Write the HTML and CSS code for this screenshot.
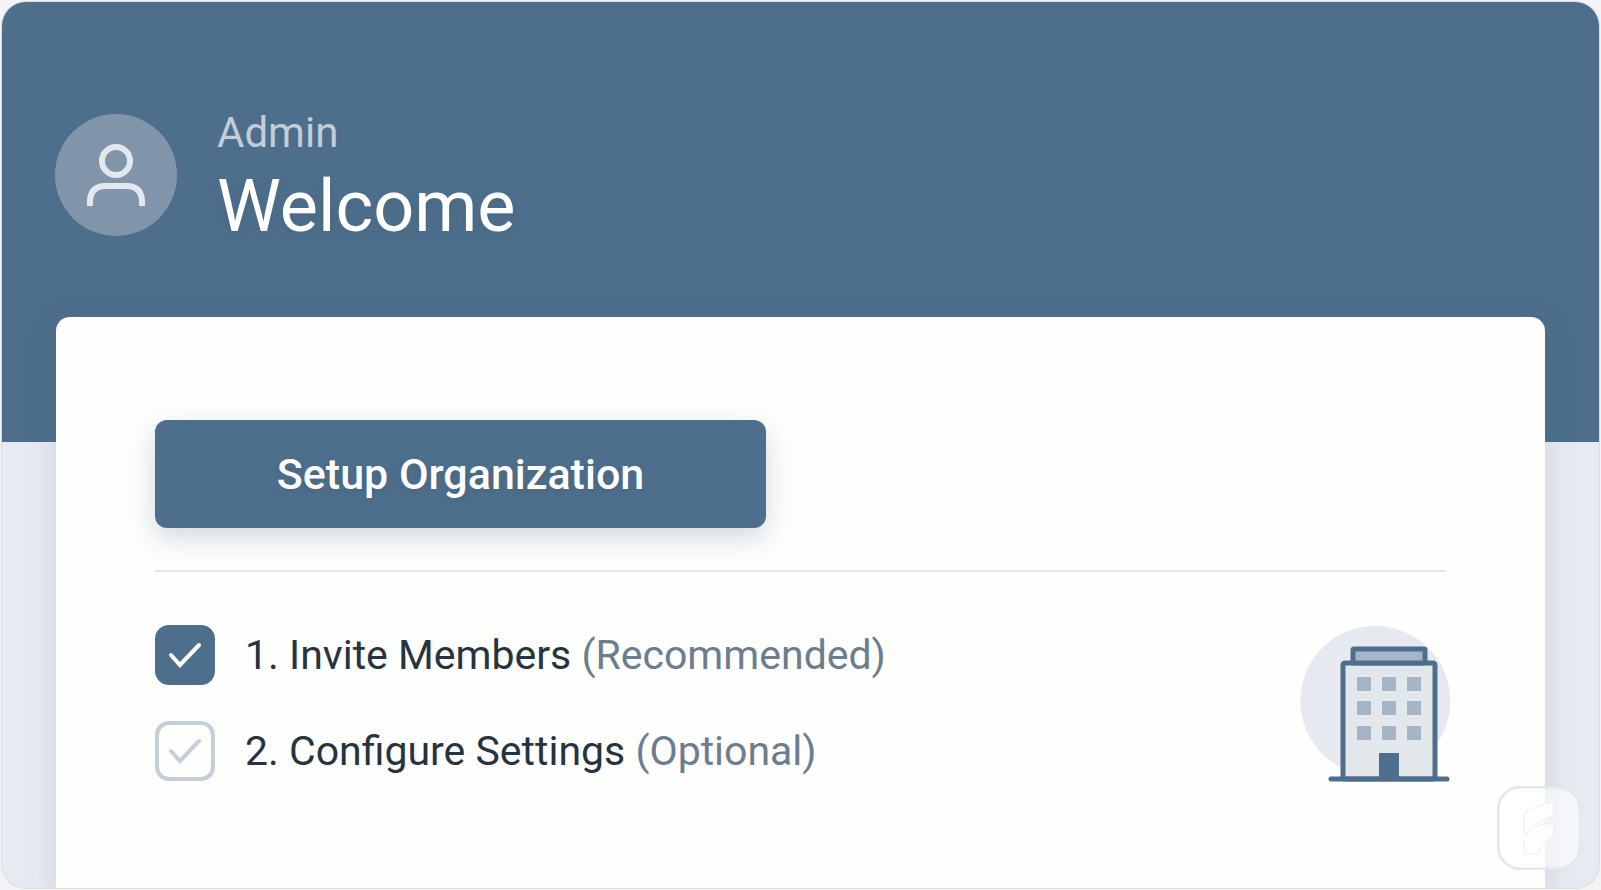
FILE: index.html
```
<!DOCTYPE html>
<html lang="en">
  <head>
    <meta charset="UTF-8" />
    <meta name="viewport" content="width=device-width, initial-scale=1.0" />
    <title>Welcome</title>
    <link rel="stylesheet" href="styles.css">
  </head>
  <body>
    <div class="screen">
      <header class="header">
        <svg class="avatar" viewBox="0 0 122 122" aria-hidden="true">
          <circle cx="61" cy="61" r="61" fill="#8195aa" />
          <g fill="none" stroke="#e3e8ee" stroke-width="6">
            <circle cx="61" cy="47" r="14" />
            <path d="M35 92V88Q35 72 51 72H71Q87 72 87 88V92" />
          </g>
        </svg>
        <div class="greeting">
          <p class="role">Admin</p>
          <h1>Welcome</h1>
        </div>
      </header>

      <main class="card">
        <button type="button" class="setup">Setup Organization</button>
        <hr />
        <div class="content">
          <ul class="steps">
            <li>
              <label class="step" for="invite">
                <span class="check">
                  <input type="checkbox" id="invite" name="invite" checked />
                  <svg class="tick" viewBox="0 0 60 60" aria-hidden="true">
                    <path d="M16 30L25 40L44 20" />
                  </svg>
                </span>
                <span>1. Invite Members <span class="note">(Recommended)</span></span>
              </label>
            </li>
            <li>
              <label class="step" for="configure">
                <span class="check">
                  <input type="checkbox" id="configure" name="configure" />
                  <svg class="tick" viewBox="0 0 60 60" aria-hidden="true">
                    <path d="M16 30L25 40L44 20" />
                  </svg>
                </span>
                <span>2. Configure Settings <span class="note">(Optional)</span></span>
              </label>
            </li>
          </ul>

          <svg class="building" viewBox="0 1 152 160" aria-hidden="true">
            <path d="M41 143A75 75 0 1 1 139 118V143Z" fill="#e6eaf0" />
            <rect x="44" y="39" width="92" height="116" rx="2" fill="#e2e7ec" stroke="#4e6f8c" stroke-width="5" />
            <rect x="54" y="25" width="72" height="14" rx="1" fill="#a5b5c6" stroke="#4e6f8c" stroke-width="5" />
            <g fill="#a5b5c6">
              <rect x="58" y="53" width="14" height="14" />
              <rect x="83" y="53" width="14" height="14" />
              <rect x="108" y="53" width="14" height="14" />
              <rect x="58" y="77" width="14" height="14" />
              <rect x="83" y="77" width="14" height="14" />
              <rect x="108" y="77" width="14" height="14" />
              <rect x="58" y="102" width="14" height="14" />
              <rect x="83" y="102" width="14" height="14" />
              <rect x="108" y="102" width="14" height="14" />
            </g>
            <rect x="80" y="129" width="20" height="26" fill="#4e6f8c" />
            <path d="M32 155H148" stroke="#4e6f8c" stroke-width="5" stroke-linecap="round" />
          </svg>
        </div>
      </main>

      <svg class="badge" viewBox="0 0 84 84" aria-hidden="true">
        <rect x="1" y="1" width="82" height="82" rx="23" fill="#fff" fill-opacity="0.6" stroke="#e4e9f0" stroke-width="3" />
        <path d="M27 48V28Q40 18 57 16V26Q54 33 46 34Q35 37 31 47Z" />
        <path d="M27 68V56Q30 44 42 39Q50 36 57 39V49Q54 54 50 55Q44 58 41 68Z" />
      </svg>
    </div>
  </body>
</html>
```

FILE: styles.css
```
* {
  box-sizing: border-box;
}

body {
  margin: 0;
  padding: 2px;
  background-color: #f4f4f4;
  color: #263340;
  font-family: Roboto, sans-serif;
  font-size: 42px;
  line-height: 48px;
}

.screen {
  position: relative;
  display: flex;
  flex-direction: column;
  min-height: calc(100vh - 4px);
  border-radius: 24px;
  background-color: #e7ebf1;
  box-shadow: 0 0 0 1px #d9dee0;
  overflow: hidden;
}

.header {
  display: flex;
  align-items: flex-start;
  gap: 40px;
  padding: 107px 53px 193px;
  background-color: #4e6f8c;
}

.avatar {
  width: 122px;
  height: 122px;
  margin-top: 5px;
}

.greeting {
  display: grid;
  gap: 8px;
}

.role,
h1 {
  margin: 0;
  font-weight: 400;
}

.role {
  color: #c3cdd8;
}

h1 {
  color: #fff;
  font-size: 72px;
  line-height: 84px;
  text-shadow: 0 4px 8px rgba(38, 51, 64, 0.15);
}

.card {
  flex: 1;
  margin: -125px 54px 0;
  padding: 103px 99px 80px;
  border-radius: 14px 14px 0 0;
  background-color: #fefefd;
  box-shadow: 0 8px 32px rgba(52, 72, 92, 0.15);
}

.setup {
  display: block;
  width: 611px;
  max-width: 100%;
  padding: 30px 20px;
  border: none;
  border-radius: 12px;
  background-color: #4e6f8c;
  box-shadow: 0 10px 28px rgba(60, 85, 120, 0.22);
  color: #fff;
  font: 500 43px/48px Roboto, sans-serif;
  text-shadow: 0 3px 6px rgba(38, 51, 64, 0.15);
  cursor: pointer;
}

.setup:hover {
  background-color: #446480;
}

hr {
  height: 2px;
  margin: 42px 0 53px;
  border: none;
  background-color: #e2e7ee;
}

.content {
  display: flex;
  justify-content: space-between;
  align-items: flex-start;
}

.steps {
  display: grid;
  gap: 36px;
  margin: 0;
  padding: 0;
  font-size: 41px;
  list-style: none;
}

.step {
  display: flex;
  align-items: center;
  gap: 30px;
  cursor: pointer;
}

.note {
  color: #6b7d8e;
}

.check {
  display: grid;
}

.check input,
.tick {
  grid-area: 1 / 1;
  width: 60px;
  height: 60px;
  margin: 0;
}

.check input {
  appearance: none;
  border: 4px solid #c5cfda;
  border-radius: 14px;
}

.check input:checked {
  border-color: #4e6f8c;
  background-color: #4e6f8c;
}

.tick {
  fill: none;
  stroke: #c5cfda;
  stroke-width: 4;
  stroke-linecap: round;
  pointer-events: none;
}

input:checked + .tick {
  stroke: #fff;
}

.building {
  width: 152px;
  height: 160px;
  margin-right: -5px;
}

/* floating badge over the card's corner */
.badge {
  position: absolute;
  right: 18px;
  bottom: 18px;
  width: 84px;
  height: 84px;
  fill: #fff;
  fill-opacity: 0.8;
  stroke: #e9edf2;
}
```
